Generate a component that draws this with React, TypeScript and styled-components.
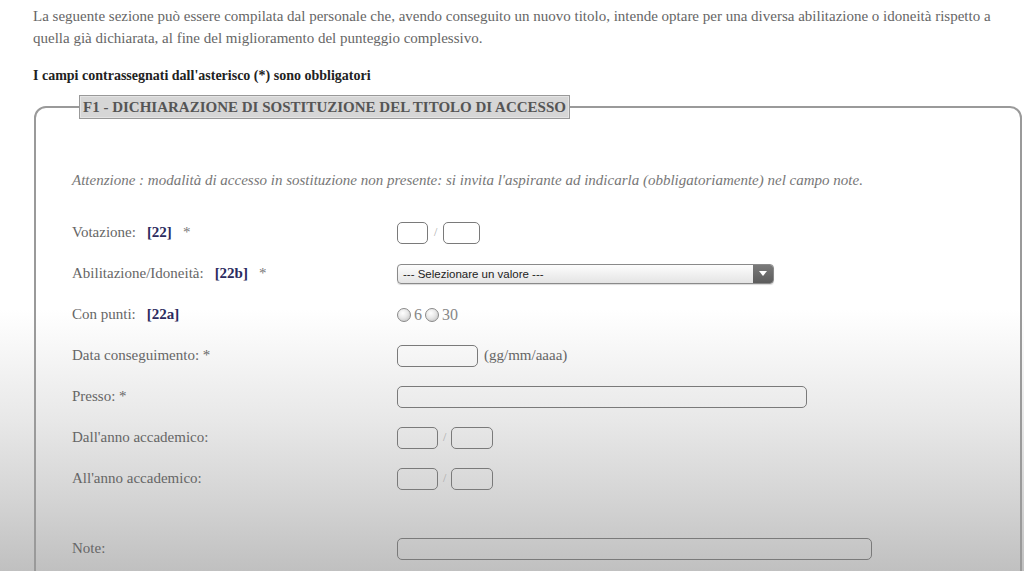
import React from 'react';
import styled, { createGlobalStyle } from 'styled-components';

const GlobalStyle = createGlobalStyle`
  html, body {
    margin: 0;
    padding: 0;
  }
  body {
    font-family: "Liberation Serif", "Times New Roman", serif;
    background: #fff;
  }
`;

const Page = styled.div`
  height: 571px;
  overflow: hidden;
  box-sizing: border-box;
  padding: 5px 2px 0 33px;
  background: linear-gradient(
    to bottom,
    #ffffff 0,
    #ffffff 310px,
    #e8e8e8 420px,
    #d4d4d4 500px,
    #c0c0c0 571px
  );
`;

const Intro = styled.p`
  margin: 0;
  font-size: 15px;
  line-height: 22px;
  color: #666;
`;

const Required = styled.p`
  margin: 18px 0 0;
  font-size: 14px;
  line-height: 18px;
  font-weight: bold;
  color: #222;
`;

const Box = styled.fieldset`
  margin: 10px 0 0 1px;
  padding: 0 0 40px 36px;
  border: 2px solid #9a9a9a;
  border-radius: 12px;
  min-width: 0;
`;

const Legend = styled.legend`
  margin-left: 7px;
  padding: 2px 3px 2px;
  background: #d6d6d6;
  border: 1px solid #999;
  font-size: 15px;
  font-weight: bold;
  color: #555;
  line-height: 18px;
  box-shadow: inset 0 0 0 1px #e4e4e4;
`;

const Notice = styled.p`
  margin: 51px 0 22px;
  font-size: 15px;
  font-style: italic;
  color: #777;
  line-height: 20px;
`;

const Row = styled.div<{ $tall?: boolean }>`
  display: grid;
  grid-template-columns: 325px 1fr;
  align-items: center;
  height: 41px;
  margin-top: ${(p) => (p.$tall ? '29px' : '0')};
`;

const Label = styled.div`
  font-size: 15px;
  color: #666;
  display: flex;
  align-items: baseline;
  gap: 11px;
`;

const Code = styled.span`
  font-weight: bold;
  color: #2b2b5e;
`;

const Star = styled.span`
  color: #777;
`;

const Field = styled.div<{ $gap?: number }>`
  display: flex;
  align-items: center;
  gap: ${(p) => p.$gap ?? 6}px;
  font-size: 15px;
  color: #777;
`;

const TextBox = styled.input<{ $w: number }>`
  width: ${(p) => p.$w}px;
  height: 22px;
  box-sizing: border-box;
  border: 1.5px solid #7a7a7a;
  border-radius: 5px;
  background: transparent;
  padding: 0 4px;
  margin: 0;
  outline: none;
`;

const Slash = styled.span`
  color: #aaa;
  font-size: 12px;
`;

const Hint = styled.span`
  font-size: 15px;
  color: #666;
`;

const Select = styled.div`
  display: flex;
  width: 377px;
  height: 20px;
  box-sizing: border-box;
  border: 1px solid #8a8a8a;
  border-radius: 4px;
  overflow: hidden;
  background: linear-gradient(to bottom, #fdfdfd, #e4e4e4);
  box-shadow: 0 1px 1px rgba(0, 0, 0, 0.15);
`;

const SelectText = styled.span`
  flex: 1;
  font-family: "Liberation Sans", Arial, sans-serif;
  font-size: 11.5px;
  line-height: 18px;
  color: #222;
  padding-left: 5px;
`;

const SelectArrow = styled.span`
  width: 20px;
  background: linear-gradient(to bottom, #7a7a7a, #5c5c5c);
  display: flex;
  align-items: center;
  justify-content: center;
  &::after {
    content: '';
    border-left: 4px solid transparent;
    border-right: 4px solid transparent;
    border-top: 5px solid #fff;
  }
`;

const Radios = styled.div`
  display: flex;
  align-items: center;
  font-size: 16px;
  color: #888;
`;

const Radio = styled.span`
  width: 12px;
  height: 12px;
  border-radius: 50%;
  border: 1px solid #8a8a8a;
  background: radial-gradient(circle at 40% 35%, #fff 0, #e8e8e8 45%, #bcbcbc 100%);
  margin-right: 3px;
`;

const RadioText = styled.span`
  margin-right: 3px;
`;

const Pair = ({ a, b, gap }: { a: number; b: number; gap: number }) => (
  <Field $gap={gap}>
    <TextBox $w={a} />
    <Slash>/</Slash>
    <TextBox $w={b} />
  </Field>
);

export default function App() {
  return (
    <>
      <GlobalStyle />
      <Page>
        <Intro>
          La seguente sezione può essere compilata dal personale che, avendo conseguito un nuovo
          titolo, intende optare per una diversa abilitazione o idoneità rispetto a
          <br />
          quella già dichiarata, al fine del miglioramento del punteggio complessivo.
        </Intro>
        <Required>I campi contrassegnati dall'asterisco (*) sono obbligatori</Required>
        <Box>
          <Legend>F1 - DICHIARAZIONE DI SOSTITUZIONE DEL TITOLO DI ACCESSO</Legend>
          <Notice>
            Attenzione : modalità di accesso in sostituzione non presente: si invita l'aspirante ad
            indicarla (obbligatoriamente) nel campo note.
          </Notice>
          <Row>
            <Label>
              Votazione: <Code>[22]</Code> <Star>*</Star>
            </Label>
            <Pair a={31} b={37} gap={6} />
          </Row>
          <Row>
            <Label>
              Abilitazione/Idoneità: <Code>[22b]</Code> <Star>*</Star>
            </Label>
            <Field>
              <Select>
                <SelectText>--- Selezionare un valore ---</SelectText>
                <SelectArrow />
              </Select>
            </Field>
          </Row>
          <Row>
            <Label>
              Con punti: <Code>[22a]</Code>
            </Label>
            <Radios>
              <Radio />
              <RadioText>6</RadioText>
              <Radio />
              <RadioText>30</RadioText>
            </Radios>
          </Row>
          <Row>
            <Label>Data conseguimento: *</Label>
            <Field>
              <TextBox $w={81} />
              <Hint>(gg/mm/aaaa)</Hint>
            </Field>
          </Row>
          <Row>
            <Label>Presso: *</Label>
            <Field>
              <TextBox $w={410} />
            </Field>
          </Row>
          <Row>
            <Label>Dall'anno accademico:</Label>
            <Pair a={41} b={42} gap={5} />
          </Row>
          <Row>
            <Label>All'anno accademico:</Label>
            <Pair a={41} b={42} gap={5} />
          </Row>
          <Row $tall>
            <Label>Note:</Label>
            <Field>
              <TextBox $w={475} />
            </Field>
          </Row>
        </Box>
      </Page>
    </>
  );
}
